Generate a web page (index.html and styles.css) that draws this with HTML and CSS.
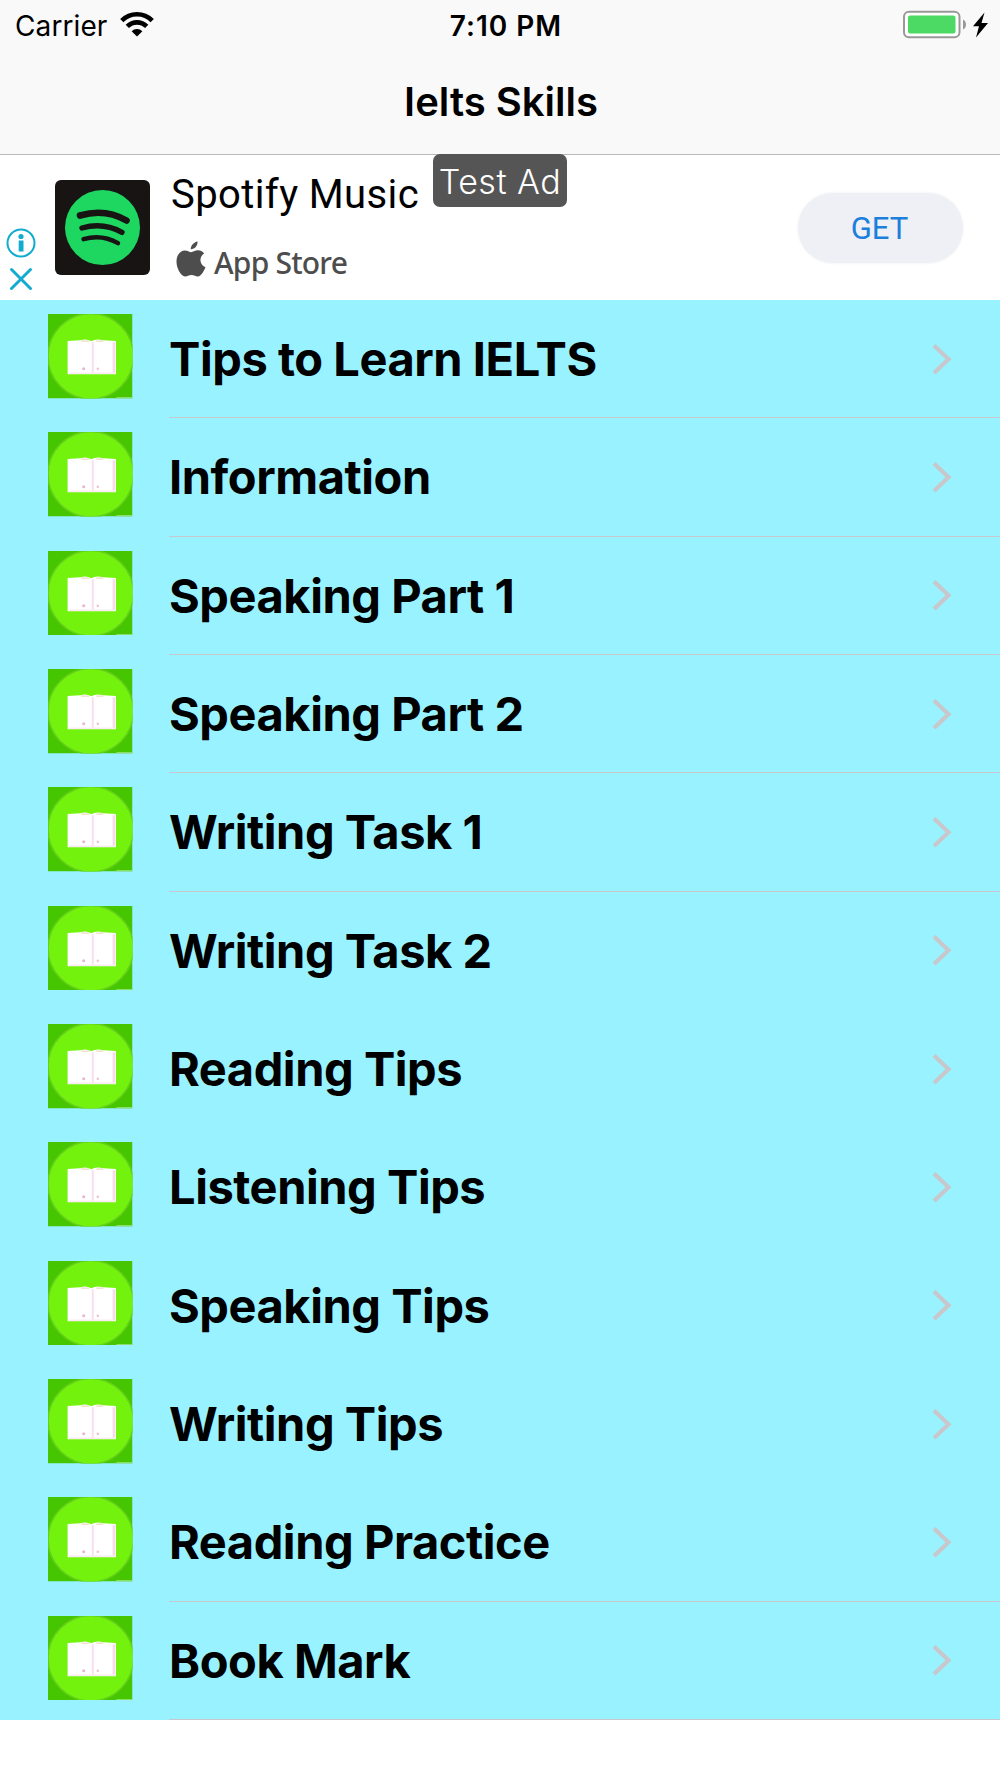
FILE: index.html
```
<!DOCTYPE html>
<html lang="en">
<head>
    <meta charset="UTF-8">
    <meta name="viewport" content="width=device-width, initial-scale=1.0">
    <title>Ielts Skills</title>
    <link rel="stylesheet" href="styles.css">
</head>
<body>
    <!-- Shared icons -->
    <svg class="sprite" width="0" height="0">
        <symbol id="book" viewBox="0 0 84 84">
            <rect width="84" height="84" fill="#45c600"/>
            <circle cx="42.500" cy="42" r="42.500" fill="#72f20d" stroke="#66cf1c" stroke-width="1.500"/>
            <path d="M19.500 26.800 L32 26.200 Q38 24 43 27 Q48 24 55 26.200 L67.500 26.800 V60 H19.500 Z" fill="#fff"/>
            <path d="M44.500 28 V59" stroke="#fadcec" stroke-width="1.800"/>
            <path d="M65.500 28 V59" stroke="#fbd9ec" stroke-width="2.500"/>
            <path d="M21 59 H66" stroke="#fbeaf4" stroke-width="1.500"/>
            <path d="M33 27 H41 M48 27 H55" stroke="#e9dcbb" stroke-width="1.200"/>
            <circle cx="35.500" cy="54.500" r="1.500" fill="#e9b3cf"/>
            <circle cx="49.500" cy="54.500" r="1.300" fill="#efc3da"/>
            <path d="M68 83.300 H84" stroke="#8edc6a" stroke-width="1.500"/>
        </symbol>
        <symbol id="chevron" viewBox="0 0 20 32">
            <path d="M2 2.500 L16.500 16.300 L2 30.100" fill="none" stroke="#c7c7cc" stroke-width="4.200"/>
        </symbol>
    </svg>

    <header class="header">
        <div class="status-bar">
            <div class="status-left">
                <span class="carrier">Carrier</span>
                <svg class="wifi" width="34" height="25" viewBox="0 0 34 25">
                    <path d="M1.800 8.600 A21.500 21.500 0 0 1 32.200 8.600" fill="none" stroke="#000" stroke-width="4.600"/>
                    <path d="M7.300 14.400 A13.700 13.700 0 0 1 26.700 14.400" fill="none" stroke="#000" stroke-width="4.600"/>
                    <path d="M11.600 19.200 A7.600 7.600 0 0 1 22.400 19.200 L17 24.500 Z" fill="#000"/>
                </svg>
            </div>
            <div class="time">7:10 PM</div>
            <div class="status-right">
                <svg width="86" height="30" viewBox="0 0 86 30">
                    <rect x="1" y="1.800" width="55.500" height="25.500" rx="5" fill="#fff" stroke="#999" stroke-width="2"/>
                    <rect x="5" y="5.500" width="47.500" height="18" rx="2" fill="#4cd964"/>
                    <path d="M60 9.500 Q63 11 63 14.500 Q63 18 60 19.500 Z" fill="#999"/>
                    <path d="M81.500 2.500 L70 16.300 H76 L73 27.500 L85 13 H78.500 Z" fill="#000"/>
                </svg>
            </div>
        </div>
        <h1 class="title">Ielts Skills</h1>
    </header>

    <!-- Ad banner -->
    <div class="ad">
        <span class="ad-label">Test Ad</span>
        <div class="ad-controls">
            <svg width="30" height="30" viewBox="0 0 30 30">
                <circle cx="15" cy="15" r="13.500" fill="none" stroke="#12acd1" stroke-width="2"/>
                <circle cx="15" cy="8.500" r="2.600" fill="#12acd1"/>
                <rect x="12.700" y="12.500" width="4.800" height="11" fill="#12acd1"/>
            </svg>
            <svg width="24" height="24" viewBox="0 0 24 24">
                <path d="M2.500 2.500 L21.500 21.500 M21.500 2.500 L2.500 21.500" stroke="#12acd1" stroke-width="3" stroke-linecap="round"/>
            </svg>
        </div>
        <svg class="ad-icon" width="95" height="95" viewBox="0 0 95 95">
            <rect width="95" height="95" rx="6" fill="#191414"/>
            <circle cx="47.500" cy="47.500" r="37.500" fill="#1ed760"/>
            <g fill="none" stroke="#191414" stroke-linecap="round">
                <path d="M25 35.500 Q50 28 71.500 40.500" stroke-width="6.600"/>
                <path d="M27 48 Q48 42 67 52.300" stroke-width="5.400"/>
                <path d="M28.500 59.200 Q47 54 63 63.200" stroke-width="4.400"/>
            </g>
        </svg>
        <div class="ad-text">
            <div class="ad-title">Spotify Music</div>
            <div class="ad-store">
                <svg width="30" height="36" viewBox="0 0 30 36">
                    <path d="M21.500 0.500 C22 5 18 8.500 14.800 8.200 C14.500 4.500 18 1 21.500 0.500 Z" fill="#4d4d4d"/>
                    <path d="M15 11.200 C17 11.200 18.800 9.300 22 9.300 C24.800 9.300 27 10.800 28.200 12.600 C22.500 16 23.500 24 29.500 26.200 C28 30 25 35.300 22 35.500 C19.500 35.600 18.500 34 15.500 34 C12.500 34 11.300 35.600 9 35.500 C5 35.200 0.500 27.500 0.500 20.500 C0.500 13.500 4.500 9.500 9 9.500 C11.500 9.500 13.500 11.200 15 11.200 Z" fill="#4d4d4d"/>
                </svg>
                <span>App Store</span>
            </div>
        </div>
        <div class="ad-button">GET</div>
    </div>

    <ul class="menu">
        <li class="menu-item">
            <svg class="menu-icon"><use href="#book"/></svg>
            <div class="menu-content"><span>Tips to Learn IELTS</span><svg class="chevron"><use href="#chevron"/></svg></div>
        </li>
        <li class="menu-item">
            <svg class="menu-icon"><use href="#book"/></svg>
            <div class="menu-content"><span>Information</span><svg class="chevron"><use href="#chevron"/></svg></div>
        </li>
        <li class="menu-item">
            <svg class="menu-icon"><use href="#book"/></svg>
            <div class="menu-content"><span>Speaking Part 1</span><svg class="chevron"><use href="#chevron"/></svg></div>
        </li>
        <li class="menu-item">
            <svg class="menu-icon"><use href="#book"/></svg>
            <div class="menu-content"><span>Speaking Part 2</span><svg class="chevron"><use href="#chevron"/></svg></div>
        </li>
        <li class="menu-item">
            <svg class="menu-icon"><use href="#book"/></svg>
            <div class="menu-content"><span>Writing Task 1</span><svg class="chevron"><use href="#chevron"/></svg></div>
        </li>
        <li class="menu-item no-line">
            <svg class="menu-icon"><use href="#book"/></svg>
            <div class="menu-content"><span>Writing Task 2</span><svg class="chevron"><use href="#chevron"/></svg></div>
        </li>
        <li class="menu-item no-line">
            <svg class="menu-icon"><use href="#book"/></svg>
            <div class="menu-content"><span>Reading Tips</span><svg class="chevron"><use href="#chevron"/></svg></div>
        </li>
        <li class="menu-item no-line">
            <svg class="menu-icon"><use href="#book"/></svg>
            <div class="menu-content"><span>Listening Tips</span><svg class="chevron"><use href="#chevron"/></svg></div>
        </li>
        <li class="menu-item no-line">
            <svg class="menu-icon"><use href="#book"/></svg>
            <div class="menu-content"><span>Speaking Tips</span><svg class="chevron"><use href="#chevron"/></svg></div>
        </li>
        <li class="menu-item no-line">
            <svg class="menu-icon"><use href="#book"/></svg>
            <div class="menu-content"><span>Writing Tips</span><svg class="chevron"><use href="#chevron"/></svg></div>
        </li>
        <li class="menu-item">
            <svg class="menu-icon"><use href="#book"/></svg>
            <div class="menu-content"><span>Reading Practice</span><svg class="chevron"><use href="#chevron"/></svg></div>
        </li>
        <li class="menu-item">
            <svg class="menu-icon"><use href="#book"/></svg>
            <div class="menu-content"><span>Book Mark</span><svg class="chevron"><use href="#chevron"/></svg></div>
        </li>
    </ul>
</body>
</html>
```

FILE: styles.css
```
:root {
    --bar: #f9f9f9;
    --line: #c8c7cc;
    --menu: #99f2ff;
    --ad-blue: #1b7fdc;
}

* {
    margin: 0;
    padding: 0;
    box-sizing: border-box;
}

body {
    width: 1000px;
    height: 1778px;
    font-family: Inter, sans-serif;
    background: #fff;
    color: #000;
    overflow: hidden;
}

svg {
    display: block;
    flex: none;
}

.sprite {
    position: absolute;
}

.header {
    height: 155px;
    background: var(--bar);
    border-bottom: 1px solid #b9b9bb;
}

.status-bar {
    display: grid;
    grid-template-columns: 1fr auto 1fr;
    height: 50px;
    padding: 0 11px 0 15px;
    font-size: 28px;
    line-height: 52px;
}

.status-left {
    display: flex;
    gap: 12px;
}

.carrier {
    width: 93px;
    letter-spacing: 0.1px;
    white-space: nowrap;
}

.wifi {
    margin-top: 12px;
}

.time {
    font-weight: 600;
    letter-spacing: 1px;
    transform: translateX(4px);
}

.status-right {
    display: flex;
    justify-content: flex-end;
    padding-top: 10px;
}

.title {
    height: 104px;
    padding-left: 2px;
    font-size: 40px;
    font-weight: 600;
    line-height: 104px;
    text-align: center;
}

.ad {
    position: relative;
    display: flex;
    height: 145px;
    padding: 0 37px 0 6px;
}

.ad-label {
    position: absolute;
    top: -1px;
    left: 433px;
    width: 134px;
    height: 53px;
    border-radius: 7px;
    background: #555;
    color: #fff;
    font-size: 34px;
    font-weight: 300;
    line-height: 56px;
    letter-spacing: 0.5px;
    text-align: center;
    white-space: nowrap;
}

.ad-controls {
    display: flex;
    flex-direction: column;
    align-items: center;
    gap: 9px;
    width: 30px;
    padding-top: 73px;
}

.ad-icon {
    margin: 25px 21px 0 19px;
}

.ad-text {
    flex: 1;
    padding-top: 16px;
    font-family: Roboto, sans-serif;
}

.ad-title {
    font-size: 40px;
    line-height: 48px;
    letter-spacing: 0.4px;
}

.ad-store {
    display: flex;
    gap: 8px;
    margin-top: 22px;
    padding-left: 5px;
    color: #4d4d4d;
    font-family: "Noto Sans", sans-serif;
    font-size: 30px;
    font-weight: 500;
    line-height: 43px;
    letter-spacing: -0.8px;
}

.ad-button {
    width: 165px;
    height: 70px;
    margin-top: 38px;
    padding-right: 2px;
    border-radius: 35px;
    background: #eff0f6;
    box-shadow: 0 0 3px #eeeeee;
    color: var(--ad-blue);
    font-family: Roboto, sans-serif;
    font-size: 31px;
    line-height: 72px;
    text-align: center;
}

.menu {
    display: grid;
    grid-template-rows: repeat(12, 1fr);
    height: 1420px;
    background: var(--menu);
    list-style: none;
}

.menu-item {
    display: flex;
    padding-left: 48px;
}

.menu-icon {
    width: 84.500px;
    height: 84.500px;
    margin: 14px 36.500px 0 0;
}

.menu-content {
    display: flex;
    flex: 1;
    align-items: center;
    justify-content: space-between;
    padding-right: 48px;
    border-bottom: 1px solid var(--line);
    font-size: 47px;
    font-weight: 700;
    letter-spacing: -0.45px;
    white-space: nowrap;
}

.no-line .menu-content {
    border-bottom-color: transparent;
}

.chevron {
    width: 20px;
    height: 32px;
}
```
